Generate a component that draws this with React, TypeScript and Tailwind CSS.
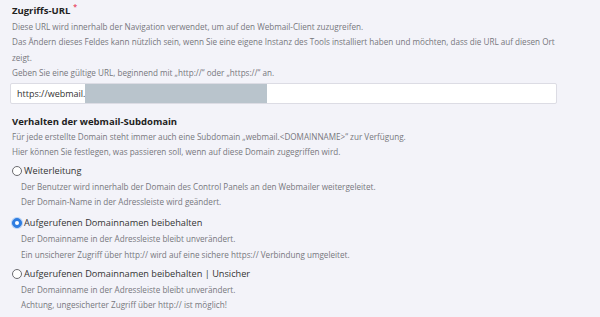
import React from 'react';

const Hint: React.FC<{ children: React.ReactNode; className?: string }> = ({ children, className = '' }) => (
  <p className={`text-[8.15px] leading-[15.3px] text-[#77777d] ${className}`}>{children}</p>
);

interface RadioOption {
  id: string;
  label: string;
  lines: string[];
  checked?: boolean;
  gap: string;
}

const options: RadioOption[] = [
  {
    id: 'redirect',
    label: 'Weiterleitung',
    lines: [
      'Der Benutzer wird innerhalb der Domain des Control Panels an den Webmailer weitergeleitet.',
      'Der Domain-Name in der Adressleiste wird geändert.',
    ],
    gap: 'mt-[3px]',
  },
  {
    id: 'keep',
    label: 'Aufgerufenen Domainnamen beibehalten',
    lines: [
      'Der Domainname in der Adressleiste bleibt unverändert.',
      'Ein unsicherer Zugriff über http:// wird auf eine sichere https:// Verbindung umgeleitet.',
    ],
    checked: true,
    gap: 'mt-[6px]',
  },
  {
    id: 'insecure',
    label: 'Aufgerufenen Domainnamen beibehalten | Unsicher',
    lines: [
      'Der Domainname in der Adressleiste bleibt unverändert.',
      'Achtung, ungesicherter Zugriff über http:// ist möglich!',
    ],
    gap: 'mt-[4px]',
  },
];

const Radio: React.FC<{ checked?: boolean }> = ({ checked }) =>
  checked ? (
    <span className="w-[10px] h-[10px] rounded-full bg-[#2f7de1] border border-[#2f7de1] flex items-center justify-center shrink-0 shadow-[0_0_0_1px_#b9d3f5]">
      <span className="w-[4px] h-[4px] rounded-full bg-white" />
    </span>
  ) : (
    <span className="w-[10px] h-[10px] rounded-full bg-white border border-[#6b6b70] shrink-0" />
  );

export default function App() {
  return (
    <div
      className="w-[600px] h-[317px] overflow-hidden bg-[#f3f3f9] pl-[12px]"
      style={{ fontFamily: '"Open Sans", "Noto Sans", sans-serif' }}
    >
      <div className="w-[545px]">
        <h3 className="pt-[3px] text-[9.5px] leading-[15px] font-bold text-[#222]">
          Zugriffs-URL
          <span className="text-[#e8506a] text-[7px] ml-[3px] relative -top-[5px]">*</span>
        </h3>
        <Hint>
          Diese URL wird innerhalb der Navigation verwendet, um auf den Webmail-Client zuzugreifen.
          <br />
          Das Ändern dieses Feldes kann nützlich sein, wenn Sie eine eigene Instanz des Tools installiert haben und möchten, dass die URL auf diesen Ort zeigt.
          <br />
          Geben Sie eine gültige URL, beginnend mit „http://“ oder „https://“ an.
        </Hint>

        <div className="mt-[3px] -ml-[2px] h-[21px] bg-white border border-[#dcdce4] rounded-[2px] flex items-stretch overflow-hidden">
          <span className="pl-[6px] text-[9px] text-[#333] flex items-center">https://webmail.</span>
          <span className="w-[182px] bg-[#b9c4cc]" />
        </div>

        <h3 className="mt-[10px] text-[9.5px] leading-[15px] font-bold text-[#222]">
          Verhalten der webmail-Subdomain
        </h3>
        <Hint>
          Für jede erstellte Domain steht immer auch eine Subdomain „webmail.&lt;DOMAINNAME&gt;“ zur Verfügung.
          <br />
          Hier können Sie festlegen, was passieren soll, wenn auf diese Domain zugegriffen wird.
        </Hint>

        {options.map((opt) => (
          <div key={opt.id} className={opt.gap}>
            <label className="flex items-center gap-[2px] h-[16px] text-[9.2px] text-[#333]">
              <Radio checked={opt.checked} />
              <span>{opt.label}</span>
            </label>
            <Hint className="pl-[9px]">
              {opt.lines[0]}
              <br />
              {opt.lines[1]}
            </Hint>
          </div>
        ))}
      </div>
    </div>
  );
}
